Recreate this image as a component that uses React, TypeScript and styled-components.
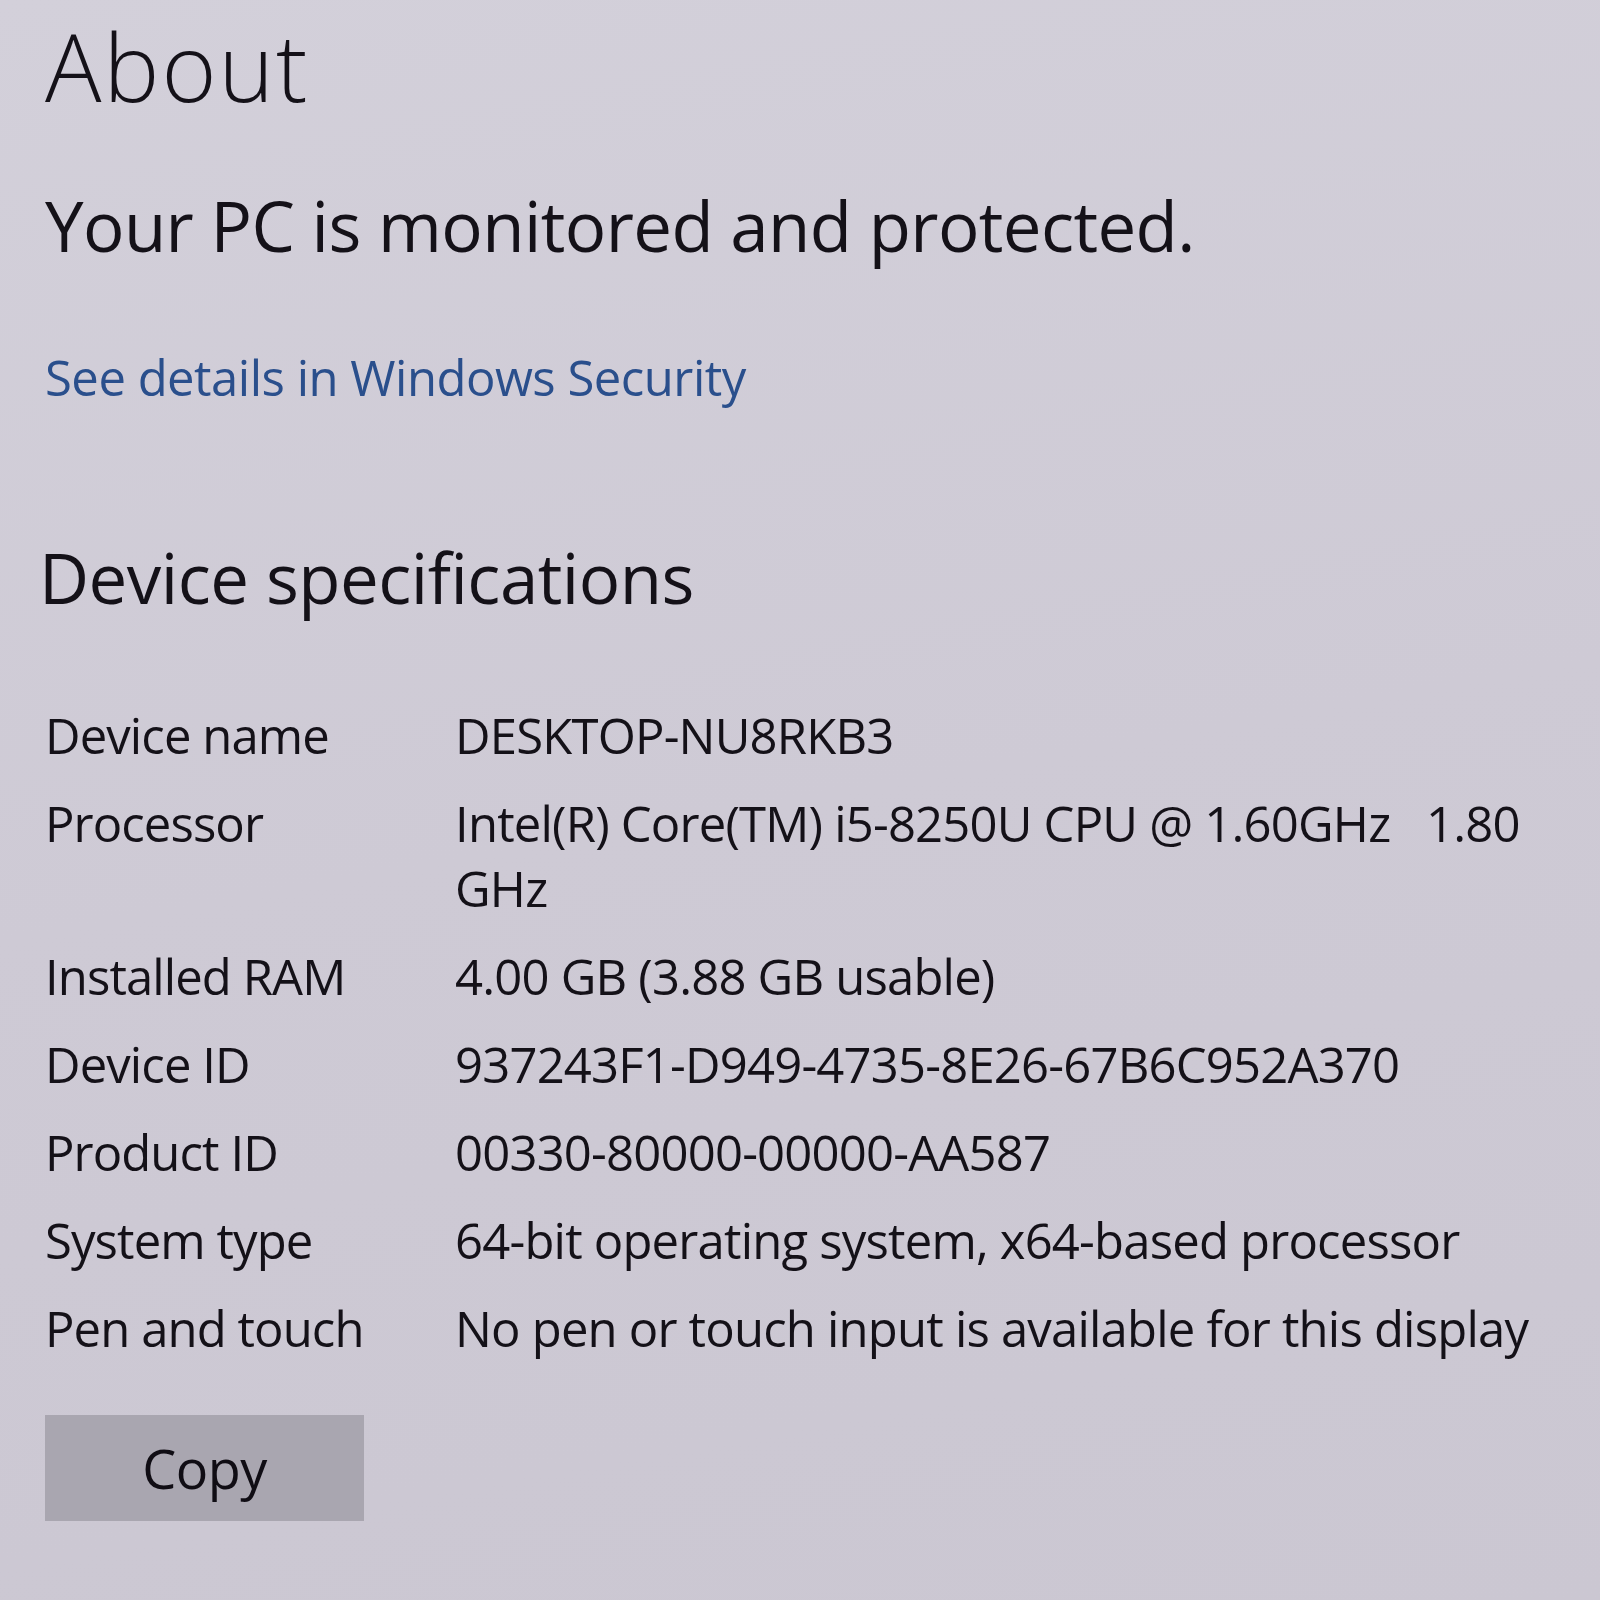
import React from 'react';
import styled, { createGlobalStyle } from 'styled-components';

const GlobalStyle = createGlobalStyle`
  html, body {
    margin: 0;
    padding: 0;
  }
  body {
    background: linear-gradient(170deg, #d3d0da 0%, #cecad5 50%, #cbc7d2 100%);
    min-height: 1600px;
    color: #141118;
    font-family: 'Open Sans', 'Noto Sans', sans-serif;
  }
`;

const Page = styled.div`
  display: flex;
  flex-direction: column;
  align-items: flex-start;
  padding: 0 0 0 45px;
  min-height: 1600px;
  box-sizing: border-box;
`;

const Title = styled.h1`
  margin: 6px 0 0 0;
  font-size: 94px;
  line-height: 120px;
  font-weight: 300;
  letter-spacing: 2px;
`;

const Status = styled.p`
  margin: 54px 0 0 0;
  font-size: 69px;
  line-height: 90px;
  font-weight: 400;
  letter-spacing: -0.6px;
`;

const SecurityLink = styled.a`
  margin-top: 72px;
  font-size: 49px;
  line-height: 70px;
  color: #2a4f8c;
  text-decoration: none;
  letter-spacing: -0.5px;
  cursor: pointer;
`;

const SectionTitle = styled.h2`
  margin: 120px 0 0 -6px;
  font-size: 69px;
  line-height: 90px;
  font-weight: 400;
  letter-spacing: -0.5px;
`;

const SpecList = styled.dl`
  display: grid;
  grid-template-columns: 410px 1090px;
  row-gap: 23px;
  margin: 81px 0 0 0;
  font-size: 49px;
  line-height: 65px;
`;

const SpecLabel = styled.dt`
  margin: 0;
  letter-spacing: -0.9px;
`;

const SpecValue = styled.dd`
  margin: 0;
  white-space: pre-wrap;
  letter-spacing: -0.8px;
`;

const CopyButton = styled.button`
  margin-top: 54px;
  width: 319px;
  height: 106px;
  border: none;
  border-radius: 0;
  background: #a9a6b0;
  color: #100d14;
  font-family: 'Open Sans', 'Noto Sans', sans-serif;
  font-size: 54px;
  letter-spacing: -0.5px;
  cursor: pointer;
`;

const specs = [
  { label: 'Device name', value: 'DESKTOP-NU8RKB3' },
  { label: 'Processor', value: 'Intel(R) Core(TM) i5-8250U CPU @ 1.60GHz   1.80 GHz' },
  { label: 'Installed RAM', value: '4.00 GB (3.88 GB usable)' },
  { label: 'Device ID', value: '937243F1-D949-4735-8E26-67B6C952A370' },
  { label: 'Product ID', value: '00330-80000-00000-AA587' },
  { label: 'System type', value: '64-bit operating system, x64-based processor' },
  { label: 'Pen and touch', value: 'No pen or touch input is available for this display' },
];

const App: React.FC = () => {
  return (
    <>
      <GlobalStyle />
      <Page>
        <Title>About</Title>
        <Status>Your PC is monitored and protected.</Status>
        <SecurityLink>See details in Windows Security</SecurityLink>
        <SectionTitle>Device specifications</SectionTitle>
        <SpecList>
          {specs.map((spec) => (
            <React.Fragment key={spec.label}>
              <SpecLabel>{spec.label}</SpecLabel>
              <SpecValue>{spec.value}</SpecValue>
            </React.Fragment>
          ))}
        </SpecList>
        <CopyButton>Copy</CopyButton>
      </Page>
    </>
  );
};

export default App;
